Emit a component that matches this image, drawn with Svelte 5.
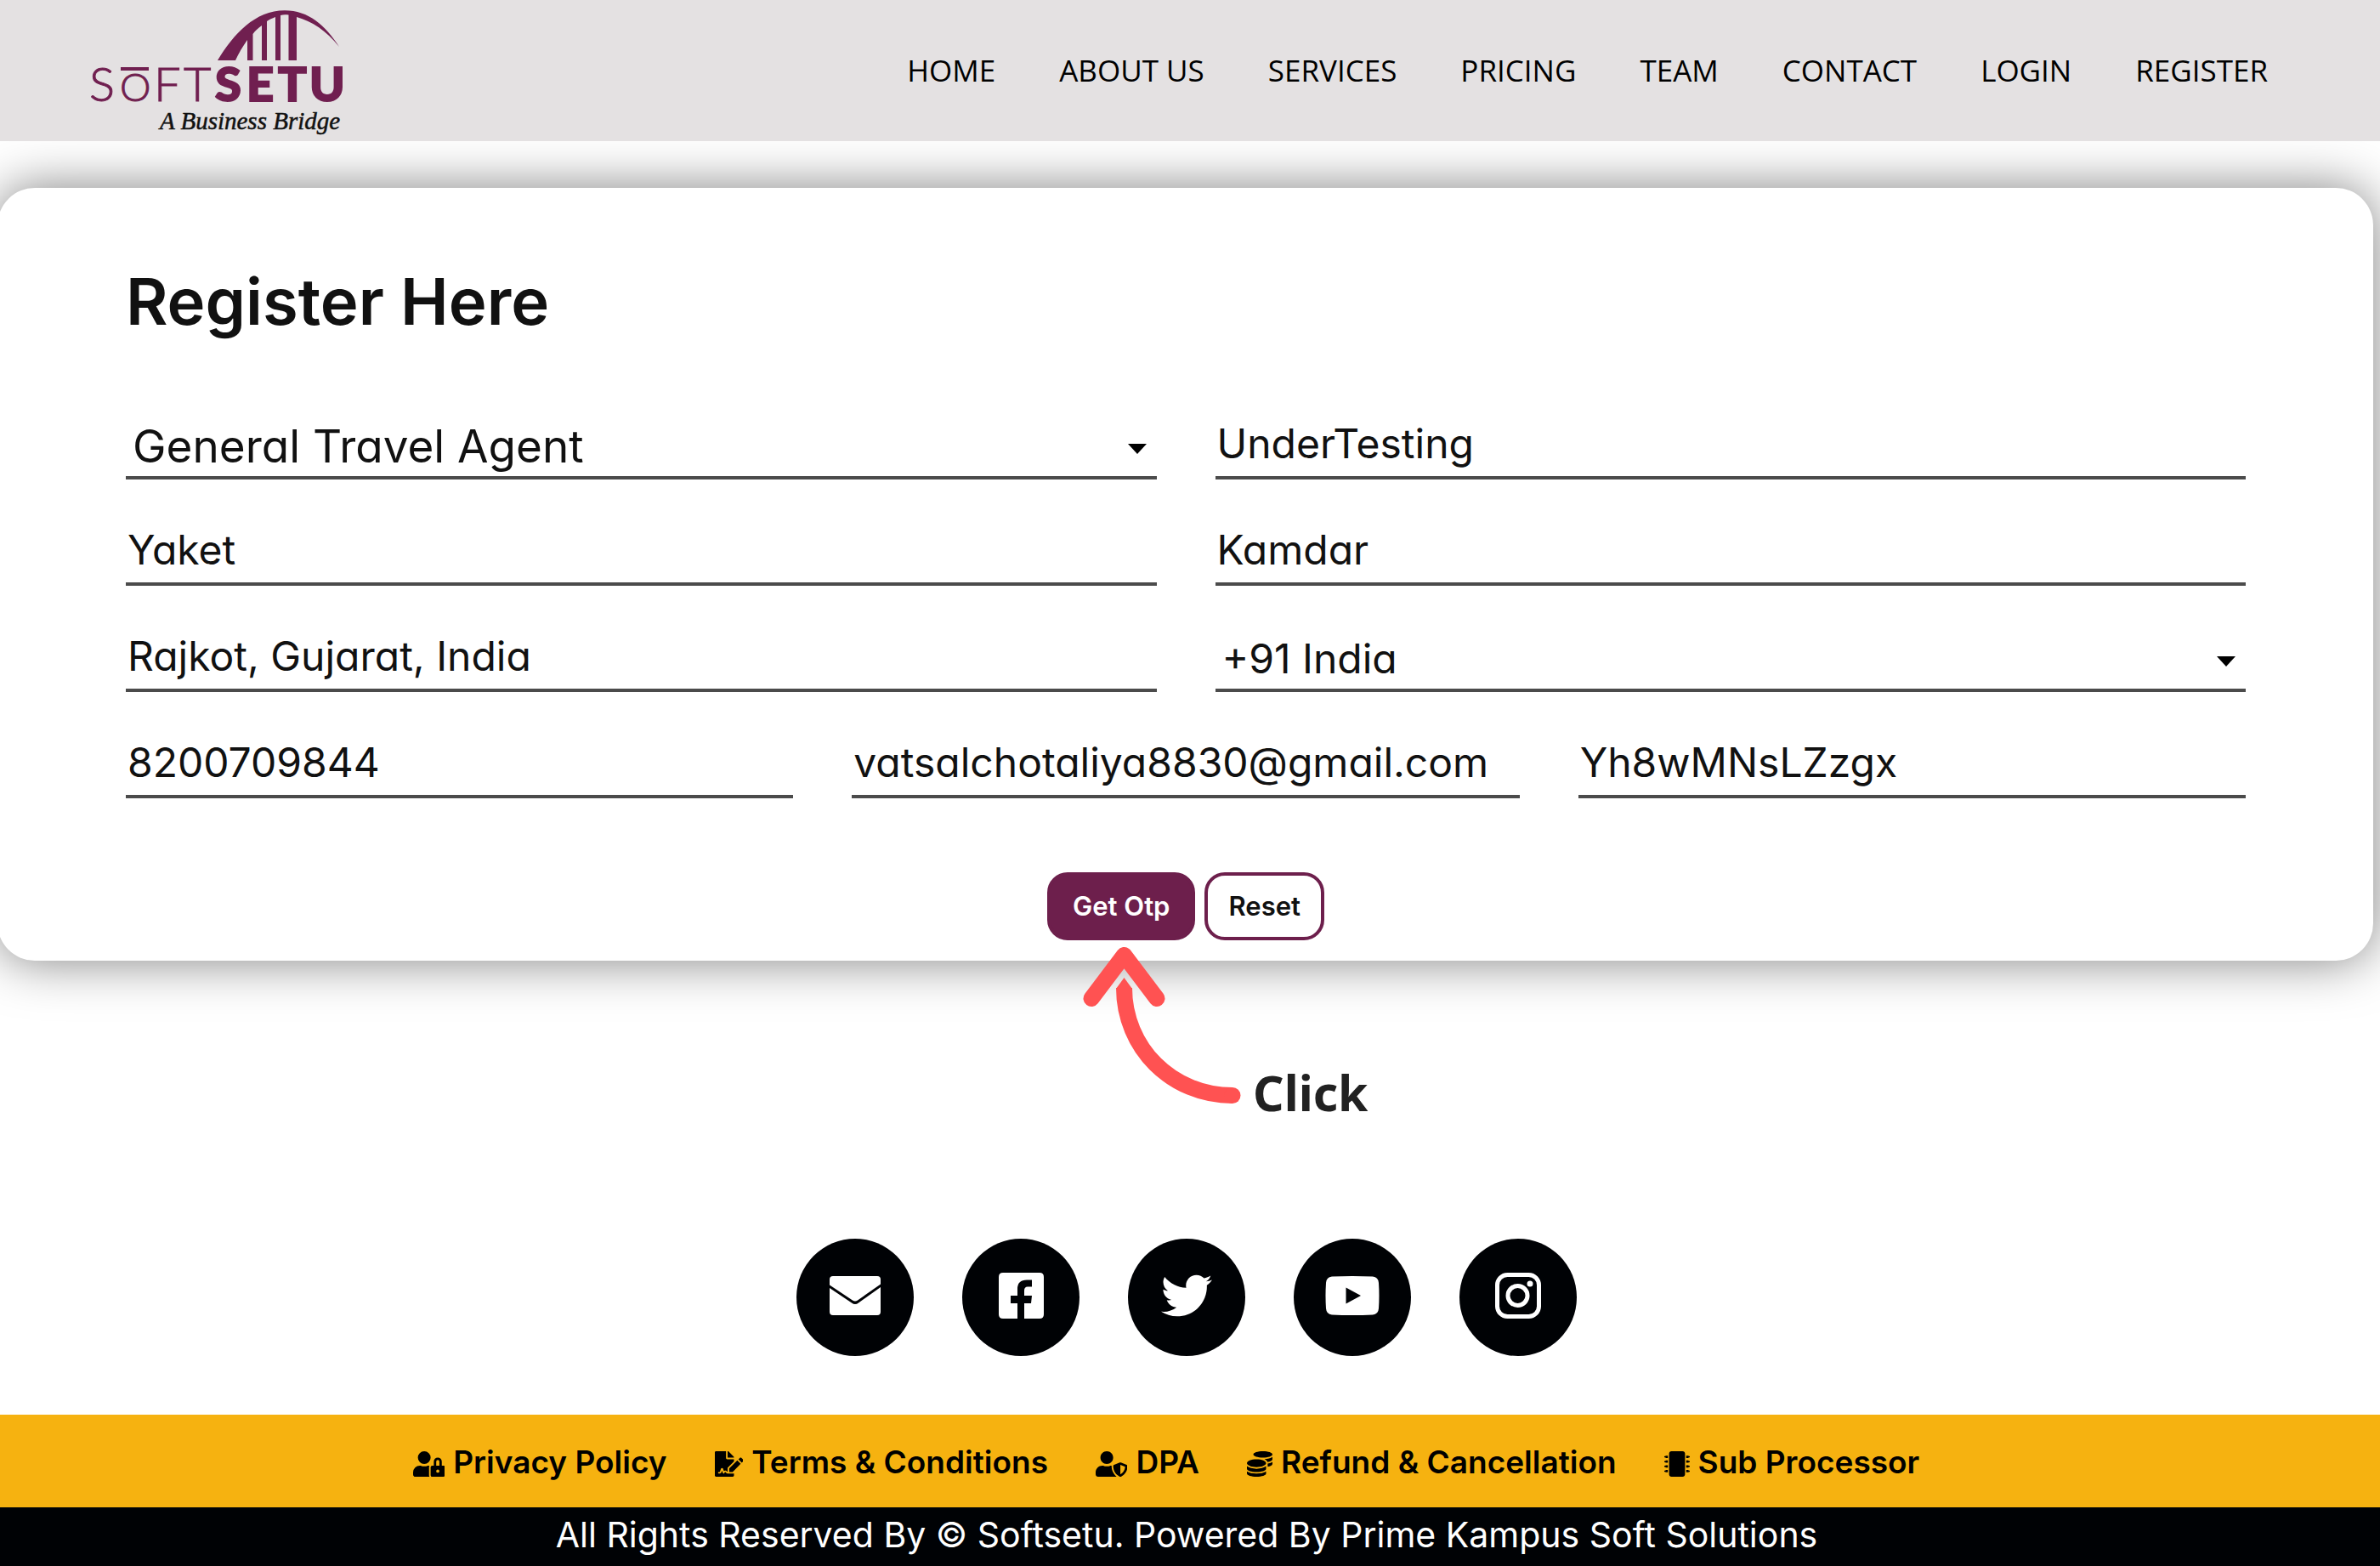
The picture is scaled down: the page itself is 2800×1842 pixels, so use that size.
<script>
  const links = ['HOME', 'ABOUT US', 'SERVICES', 'PRICING', 'TEAM', 'CONTACT', 'LOGIN', 'REGISTER'];

  const pins = [106, 202, 298, 394];

  const policies = [
    {
      label: 'Privacy Policy',
      width: 640,
      path: 'M224 256A128 128 0 1 0 96 128a128 128 0 0 0 128 128zm96 64a63.08 63.08 0 0 1 8.1-30.5c-4.8-.5-9.5-1.5-14.5-1.5h-16.7a174.08 174.08 0 0 1-145.8 0h-16.7A134.43 134.43 0 0 0 0 422.4V464a48 48 0 0 0 48 48h280.9a63.54 63.54 0 0 1-8.9-32zm288-32h-32v-80a80 80 0 0 0-160 0v80h-32a32 32 0 0 0-32 32v160a32 32 0 0 0 32 32h224a32 32 0 0 0 32-32V320a32 32 0 0 0-32-32zM496 432a32 32 0 1 1 32-32 32 32 0 0 1-32 32zm32-144h-64v-80a32 32 0 0 1 64 0z'
    },
    {
      label: 'Terms & Conditions',
      width: 576,
      path: 'M218.17 424.14c-2.95-5.92-8.09-6.52-10.17-6.52s-7.22.59-10.02 6.19l-7.67 15.34c-6.37 12.78-25.03 11.37-29.48-2.09L144 386.59l-10.61 31.88c-5.89 17.66-22.38 29.53-41 29.53H80c-8.84 0-16-7.16-16-16s7.16-16 16-16h12.39c4.83 0 9.11-3.08 10.64-7.66l18.19-54.64c3.3-9.81 12.44-16.41 22.78-16.41s19.48 6.59 22.77 16.41l13.88 41.64c19.75-16.19 54.06-9.7 66 14.16 1.89 3.78 5.49 5.95 9.36 6.26v-82.12l128-127.09V160H248c-13.2 0-24-10.8-24-24V0H24C10.7 0 0 10.7 0 24v464c0 13.3 10.7 24 24 24h336c13.3 0 24-10.7 24-24v-40l-128-.11c-16.12-.31-30.58-9.28-37.83-23.75zM384 121.9c0-6.3-2.5-12.4-7-16.9L279.1 7c-4.5-4.5-10.6-7-17-7H256v128h128v-6.1zm-96 225.06V416h68.99l161.68-162.78-67.88-67.88L288 346.96zm280.54-179.63l-31.87-31.87c-9.94-9.94-26.07-9.94-36.01 0l-27.25 27.25 67.88 67.88 27.25-27.25c9.95-9.94 9.95-26.07 0-36.01z'
    },
    {
      label: 'DPA',
      width: 640,
      path: 'M622.3 271.1l-115.2-45c-4.1-1.6-12.6-3.7-22.2 0l-115.2 45c-10.7 4.2-17.7 14-17.7 24.9 0 111.6 68.7 188.8 132.9 213.9 9.6 3.7 18 1.6 22.2 0C558.4 489.9 640 420.5 640 296c0-10.9-7-20.7-17.7-24.9zM496 462.4V273.3l95.5 37.3c-5.6 87.1-60.9 135.4-95.5 151.8zM224 256c70.7 0 128-57.3 128-128S294.7 0 224 0 96 57.3 96 128s57.3 128 128 128zm96 40c0-2.5.8-4.8 1.1-7.2-2.5-.1-4.9-.8-7.5-.8h-16.7c-22.2 10.2-46.9 16-72.9 16s-50.6-5.8-72.9-16h-16.7C60.2 288 0 348.2 0 422.4V464c0 26.5 21.5 48 48 48h352c6.8 0 13.3-1.5 19.2-4-54-42.9-99.2-116.7-99.2-212z'
    },
    {
      label: 'Refund & Cancellation',
      width: 512,
      path: 'M0 405.3V448c0 35.3 86 64 192 64s192-28.7 192-64v-42.7C342.7 434.4 267.2 448 192 448S41.3 434.4 0 405.3zM320 128c106 0 192-28.7 192-64S426 0 320 0 128 28.7 128 64s86 64 192 64zM0 300.4V352c0 35.3 86 64 192 64s192-28.7 192-64v-51.6c-41.3 34-116.9 51.6-192 51.6S41.3 334.4 0 300.4zm416 11c57.3-11.1 96-31.7 96-55.4v-42.7c-23.2 16.4-57.3 27.6-96 34.5v63.6zM192 160C86 160 0 195.8 0 240s86 80 192 80 192-35.8 192-80-86-80-192-80zm219.3 56.3c60-10.8 100.7-32 100.7-56.3v-42.7c-35.5 25.1-96.5 38.6-160.7 41.8 29.5 14.3 51.2 33.5 60 57.2z'
    },
    {
      label: 'Sub Processor',
      width: 512,
      path:
        'M416 48v416c0 26.5-21.5 48-48 48H144c-26.5 0-48-21.5-48-48V48c0-26.5 21.5-48 48-48h224c26.5 0 48 21.5 48 48z' +
        pins
          .map((y) => `M512 ${y}v12a6 6 0 0 1-6 6h-18v6a6 6 0 0 1-6 6h-42v-48h42a6 6 0 0 1 6 6v6h18a6 6 0 0 1 6 6zM0 ${y}v12a6 6 0 0 0 6 6h18v6a6 6 0 0 0 6 6h42v-48h-42a6 6 0 0 0-6 6v6h-18a6 6 0 0 0-6 6z`)
          .join('')
    }
  ];
</script>

<header>
  <a class="brand" href="#home" aria-label="Softsetu, A Business Bridge">
    <svg class="logo" viewBox="100 0 310 166">
      <g fill="#701f50">
        <path d="M256 71C275 40 300 12.300 335 12.300C363 12.300 383 30 399 55C384 36 367 25 349 20V71H339.500V17.500C336 17 333 17 330 18V71H324V20C320 21.500 317 23 314 25V71H308V30C304 33 300 36 297.500 40V71H291V47C286 54 281 62 277 71Z" />
        <rect x="142" y="79" width="33" height="4" />
      </g>
      <text class="thin" x="105" y="119">S</text>
      <text class="thin ring" x="141" y="119">O</text>
      <text class="thin" x="181 216" y="119">FT</text>
      <text class="heavy" x="253 290 327 364" y="119">SETU</text>
      <text class="tagline" x="188" y="152">A Business Bridge</text>
    </svg>
  </a>
  <nav>
    {#each links as link}
      <a href="#{link.toLowerCase().replace(' ', '-')}">{link}</a>
    {/each}
  </nav>
</header>

<main>
  <form class="card" onsubmit={(e) => e.preventDefault()}>
    <h1>Register Here</h1>

    <div class="row two">
      <div class="pick">
        <select class="large" aria-label="Business type">
          <option>General Travel Agent</option>
        </select>
        <svg class="caret" viewBox="0 0 22 12"><path d="M0 0H22L11 12Z" /></svg>
      </div>
      <input type="text" aria-label="Company name" value="UnderTesting" />
      <input type="text" aria-label="First name" value="Yaket" />
      <input type="text" aria-label="Last name" value="Kamdar" />
      <input type="text" aria-label="Location" value="Rajkot, Gujarat, India" />
      <div class="pick">
        <select aria-label="Country code">
          <option>+91 India</option>
        </select>
        <svg class="caret" viewBox="0 0 22 12"><path d="M0 0H22L11 12Z" /></svg>
      </div>
    </div>
    <div class="row three">
      <input type="tel" aria-label="Mobile number" value="8200709844" />
      <input type="email" aria-label="Email" value="vatsalchotaliya8830@gmail.com" />
      <input type="text" aria-label="Password" value="Yh8wMNsLZzgx" />
    </div>

    <div class="actions">
      <div class="target">
        <button class="primary" type="submit">Get Otp</button>
        <div class="hint">
          <svg viewBox="0 0 186 186">
            <path class="head" d="M10 60.500L48.500 9.500L87 60.500" />
            <path class="shaft" d="M48.500 48C48.500 118 104 174.500 176 174.500" />
            <path class="tip" d="M39 49L48.500 36L58 49Z" />
            <circle class="tip" cx="176" cy="174.500" r="9.500" />
          </svg>
          <span>Click</span>
        </div>
      </div>
      <button class="outline" type="reset">Reset</button>
    </div>
  </form>

  <div class="social">
    <a href="#email" aria-label="Email">
      <svg width="60" height="46" viewBox="0 0 60 46">
        <path d="M4 0H56Q60 0 60 4V9.500L33 28.500Q30 30.500 27 28.500L0 10.500V4Q0 0 4 0Z" />
        <path d="M0 14L26 31.500Q30 34.500 34 31.500L60 13V42Q60 46 56 46H4Q0 46 0 42Z" />
      </svg>
    </a>
    <a href="#facebook" aria-label="Facebook">
      <svg width="53" height="56" viewBox="0 0 53 56">
        <path d="M5 1H48Q53 1 53 6V50Q53 55 48 55H30V37H38L39 28H30V22Q30 17.500 34 17.500H39V9.500H33Q22 9.500 22 20V28H14V37H22V55H5Q0 55 0 50V6Q0 1 5 1Z" />
      </svg>
    </a>
    <a href="#twitter" aria-label="Twitter">
      <svg width="60" height="60" viewBox="0 0 512 512">
        <path d="M459.370 151.716c.325 4.548.325 9.097.325 13.645 0 138.720-105.583 298.558-298.558 298.558-59.452 0-114.680-17.219-161.137-47.106 8.447.974 16.568 1.299 25.340 1.299 49.055 0 94.213-16.568 130.274-44.832-46.132-.975-84.792-31.188-98.112-72.772 6.498.974 12.995 1.624 19.818 1.624 9.421 0 18.843-1.300 27.614-3.573-48.081-9.747-84.143-51.980-84.143-102.985v-1.299c13.969 7.797 30.214 12.670 47.431 13.319-28.264-18.843-46.781-51.005-46.781-87.391 0-19.492 5.197-37.360 14.294-52.954 51.655 63.675 129.300 105.258 216.365 109.807-1.624-7.797-2.599-15.918-2.599-24.040 0-57.828 46.782-104.934 104.934-104.934 30.213 0 57.502 12.670 76.670 33.137 23.715-4.548 46.456-13.320 66.599-25.340-7.798 24.366-24.366 44.833-46.132 57.827 21.117-2.273 41.584-8.122 60.426-16.243-14.292 20.791-32.161 39.308-52.628 54.253z" />
      </svg>
    </a>
    <a href="#youtube" aria-label="YouTube">
      <svg width="64" height="46" viewBox="0 0 64 46">
        <path d="M8 .500Q32 -.500 56 .500Q62.500 1 63 8Q64 23 63 38Q62.500 45 56 45.500Q32 46.500 8 45.500Q1.500 45 1 38Q0 23 1 8Q1.500 1 8 .500ZM24.500 13.500V32.500L42 23Z" />
      </svg>
    </a>
    <a href="#instagram" aria-label="Instagram">
      <svg width="54" height="54" viewBox="0 0 54 54">
        <rect class="line" x="2.500" y="2.500" width="49" height="49" rx="12" />
        <circle class="line" cx="26.500" cy="27" r="11.500" />
        <circle cx="41" cy="13" r="3.500" />
      </svg>
    </a>
  </div>
</main>

<footer>
  <div class="policies">
    {#each policies as policy}
      <a href="#{policy.label.toLowerCase().replaceAll(' ', '-')}">
        <svg viewBox="0 0 {policy.width} 512"><path d={policy.path} /></svg>
        {policy.label}
      </a>
    {/each}
  </div>
  <p>All Rights Reserved By © Softsetu. Powered By Prime Kampus Soft Solutions</p>
</footer>

<style>
  :global(body) {
    margin: 0;
    background: #fff;
    overflow-x: hidden;
  }

  :global(#app) {
    display: flex;
    flex-direction: column;
    min-height: 100vh;
    font-family: Inter, sans-serif;
    color: #111;
  }

  a {
    color: inherit;
    text-decoration: none;
  }

  header {
    position: relative;
    z-index: 1;
    display: flex;
    align-items: center;
    justify-content: space-between;
    padding: 0 132px 0 100px;
    background: #e4e1e2;
  }

  .brand,
  .logo {
    display: block;
  }

  .logo {
    width: 310px;
    height: 166px;
  }

  .thin,
  .heavy {
    font-family: Lato, sans-serif;
    font-size: 56px;
    fill: #701f50;
    stroke: #701f50;
  }

  .thin {
    font-weight: 300;
    stroke-width: 1;
  }

  .ring {
    font-size: 46px;
  }

  .heavy {
    font-weight: 900;
    stroke-width: 2;
  }

  .tagline {
    font-family: "Liberation Serif", serif;
    font-size: 29px;
    font-style: italic;
    fill: #111;
    stroke: #111;
    stroke-width: 0.5;
  }

  nav {
    display: flex;
    gap: 75px;
    font-family: "Open Sans", sans-serif;
    font-size: 35px;
    line-height: 46px;
    color: #000;
  }

  main {
    flex: 1;
    padding: 55px 8px 67px 0;
  }

  .card {
    margin-left: -3px;
    padding: 91px 150px 24px 151px;
    border-radius: 44px;
    box-shadow: 0 0 60px rgba(0, 0, 0, 0.5);
    background: #fff;
  }

  h1 {
    margin: 0 0 94px;
    font-size: 76px;
    font-weight: 600;
    line-height: 84px;
    font-feature-settings: "cv11";
  }

  .row {
    display: grid;
    gap: 51px 69px;
  }

  .two {
    grid-template-columns: repeat(2, 1fr);
  }

  .three {
    grid-template-columns: repeat(3, 1fr);
    margin-top: 51px;
  }

  input,
  select {
    box-sizing: border-box;
    width: 100%;
    height: 74px;
    margin: 0;
    padding: 0 0 7px 2px;
    border: 0;
    border-bottom: 4px solid #4b4b4b;
    border-radius: 0;
    outline: 0;
    background: none;
    font: 400 48px/60px Inter, sans-serif;
    font-feature-settings: "cv11";
    color: #111;
  }

  select {
    appearance: none;
    padding: 0 48px 0 8px;
  }

  .large {
    font-size: 53px;
  }

  .pick {
    position: relative;
  }

  .caret {
    position: absolute;
    right: 12px;
    top: 32px;
    width: 22px;
    height: 12px;
    pointer-events: none;
  }

  .actions {
    display: flex;
    justify-content: center;
    gap: 11px;
    margin-top: 87px;
  }

  .target {
    position: relative;
  }

  button {
    height: 80px;
    border: 4px solid #6d1f4c;
    border-radius: 24px;
    font: 600 31px/40px Inter, sans-serif;
    font-feature-settings: "cv11";
  }

  .primary {
    padding: 0 26px;
    background: #6d1f4c;
    color: #fff;
  }

  .outline {
    padding: 0 24px;
    background: #fff;
    color: #111;
  }

  .hint {
    position: absolute;
    left: 42px;
    top: 88px;
    display: flex;
    align-items: flex-end;
    gap: 14px;
    pointer-events: none;
  }

  .hint svg {
    flex: none;
    width: 186px;
    height: 186px;
    margin-bottom: 17px;
  }

  .hint span {
    font-family: "Noto Sans", sans-serif;
    font-size: 57px;
    font-weight: 700;
    line-height: 64px;
    color: #212121;
  }

  .head,
  .shaft {
    fill: none;
    stroke: #ff5252;
    stroke-width: 19;
    stroke-linejoin: round;
  }

  .head {
    stroke-linecap: round;
  }

  .tip {
    fill: #ff5252;
  }

  .social {
    display: flex;
    justify-content: center;
    gap: 57px;
    margin-top: 327px;
  }

  .social a {
    display: grid;
    place-items: center;
    box-sizing: border-box;
    width: 138px;
    height: 138px;
    padding-bottom: 4px;
    border-radius: 50%;
    background: #000205;
  }

  .social svg {
    fill: #fff;
  }

  .social .line {
    fill: none;
    stroke: #fff;
    stroke-width: 5;
  }

  .policies {
    display: flex;
    justify-content: center;
    gap: 56px;
    padding: 32px 56px 29px 0;
    background: #f6b210;
    font-size: 37px;
    font-weight: 600;
    line-height: 48px;
    color: #000;
  }

  .policies a {
    display: flex;
    align-items: center;
    gap: 10px;
  }

  .policies svg {
    height: 30px;
    padding-top: 4px;
  }

  p {
    margin: 0;
    padding: 8px 8px 13px 0;
    background: #000205;
    color: #fff;
    font-size: 41px;
    line-height: 48px;
    text-align: center;
  }
</style>
